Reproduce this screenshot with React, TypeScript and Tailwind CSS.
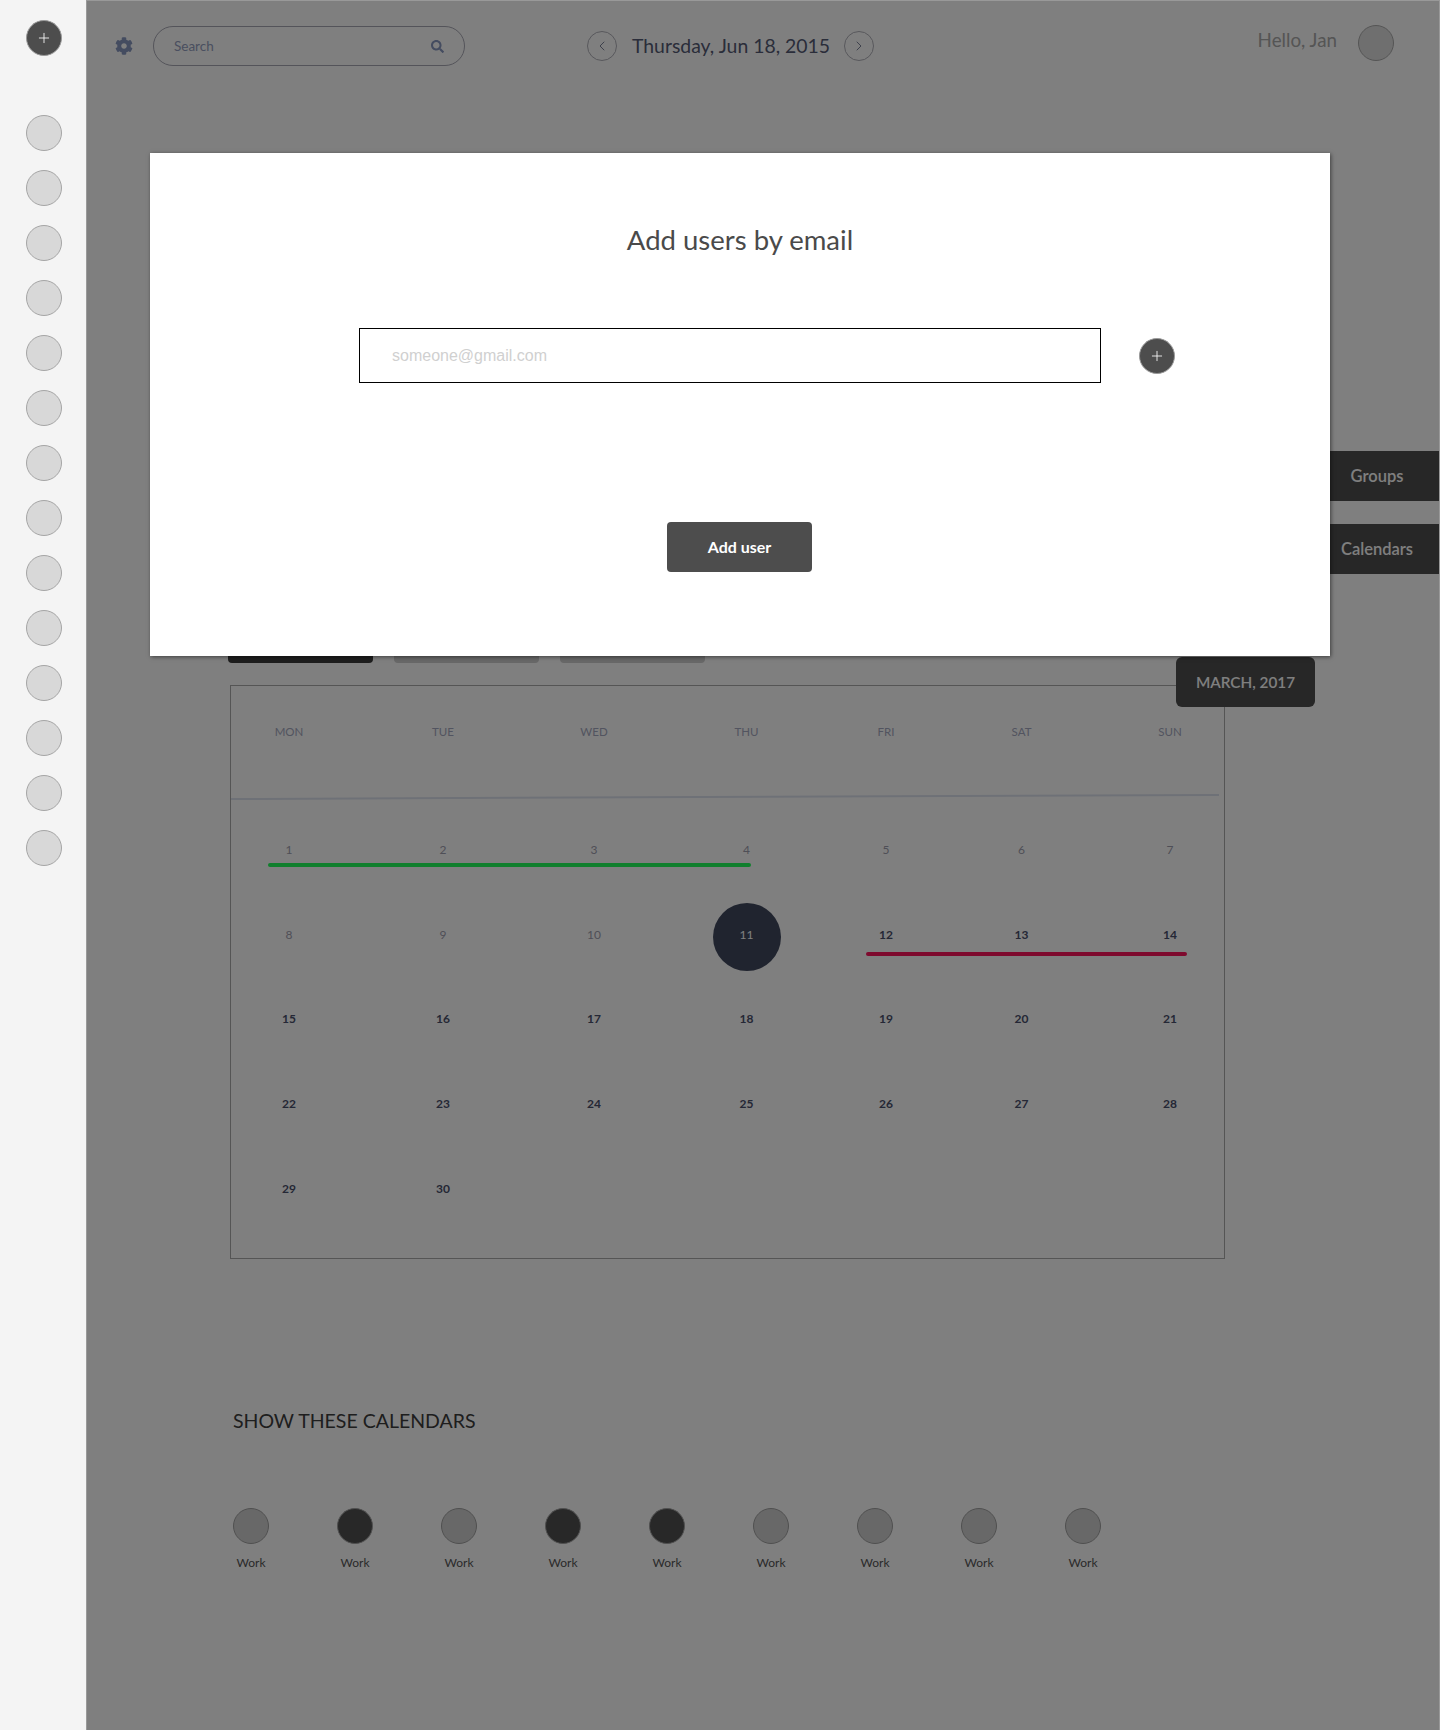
import React from 'react';
import { ChevronLeft, ChevronRight, Plus } from 'lucide-react';
import { FaCog, FaSearch } from 'react-icons/fa';

const weekDays = ['MON', 'TUE', 'WED', 'THU', 'FRI', 'SAT', 'SUN'];
const weeks = [
  [1, 2, 3, 4, 5, 6, 7],
  [8, 9, 10, 11, 12, 13, 14],
  [15, 16, 17, 18, 19, 20, 21],
  [22, 23, 24, 25, 26, 27, 28],
  [29, 30],
];
const calendars = [false, true, false, true, true, false, false, false, false];
const gridCols = 'grid grid-cols-[116px_192px_110px_195px_84px_187px_110px]';

const AddButton: React.FC = () => (
  <button className="w-9 h-9 rounded-full bg-[#4d4d4d] border border-[#9a9a9a] flex items-center justify-center shrink-0">
    <Plus className="w-4 h-4 text-white" strokeWidth={1.25} />
  </button>
);

const Sidebar: React.FC = () => (
  <aside className="w-[86px] shrink-0 bg-[#f4f4f4] flex flex-col pl-[25.5px] pt-5">
    <AddButton />
    <div className="mt-[59px] flex flex-col gap-[19px]">
      {Array.from({ length: 14 }).map((_, i) => (
        <div key={i} className="w-9 h-9 rounded-full bg-[#d8d8d8] border border-[#a5a5a5]" />
      ))}
    </div>
  </aside>
);

const Header: React.FC = () => (
  <header className="h-[92px] flex items-start relative">
    <FaCog className="w-[18px] h-[18px] text-[#8898c0] ml-[29px] mt-[37px]" />
    <div className="ml-[20px] mt-[26px] w-[312px] h-[40px] rounded-full border border-[#a8a8b4] flex items-center justify-between pl-5 pr-5">
      <span className="mt-[1px] text-[13.5px] text-[#949ec0]">Search</span>
      <FaSearch className="w-[13px] h-[13px] text-[#8898c0]" />
    </div>
    <div className="ml-[122px] mt-[31px] flex items-center">
      <div className="w-[30px] h-[30px] rounded-full border border-[#b0b0b8] flex items-center justify-center">
        <ChevronLeft className="w-4 h-4 text-[#7c8298]" strokeWidth={1.5} />
      </div>
      <span className="ml-[15px] w-[198px] text-[19.4px] text-[#545a74] whitespace-nowrap">Thursday, Jun 18, 2015</span>
      <div className="ml-[14px] w-[30px] h-[30px] rounded-full border border-[#b0b0b8] flex items-center justify-center">
        <ChevronRight className="w-4 h-4 text-[#7c8298]" strokeWidth={1.5} />
      </div>
    </div>
    <div className="ml-auto mr-[46px] mt-[25px] flex items-start">
      <span className="mt-[2px] text-[18.8px] leading-[26px] text-[#aaaaaa]">Hello, Jan</span>
      <div className="ml-[21px] w-9 h-9 rounded-full bg-[#dedede] border border-[#aaaaaa]" />
    </div>
  </header>
);

const CalendarGrid: React.FC = () => (
  <div className="relative ml-[144px] mt-[22px] w-[995px] h-[574px] border border-[#aaaaaa]">
    <div className={`${gridCols} h-[46px] mt-[23px] items-center`}>
      {weekDays.map(d => (
        <span key={d} className="text-center text-[11.5px] text-[#a4a8c0]">{d}</span>
      ))}
    </div>
    <div className="mt-[41px] w-[988px] h-[2px] bg-[#dde2ee] -rotate-[0.23deg]" />
    <div className="pt-[10px] relative">
      {weeks.map((week, wi) => (
        <div key={wi} className={`${gridCols} h-[84.6px] items-center`}>
          {week.map(day => {
            const today = day === 11;
            const past = day < 11;
            return (
              <div key={day} className="relative flex items-center justify-center">
                {today && <div className="absolute w-[68px] h-[68px] rounded-full bg-[#40485e] top-1/2 left-1/2 -translate-x-1/2 -translate-y-1/2 mt-[2px]" />}
                <span
                  className={`relative text-[12px] ${
                    today ? 'text-white' : past ? 'text-[#9e9eae]' : 'text-[#4a506c] font-bold'
                  }`}
                >
                  {day}
                </span>
              </div>
            );
          })}
        </div>
      ))}
      <div className="absolute left-[37px] top-[65px] w-[483px] h-1 rounded-full bg-[#21ff5a]" />
      <div className="absolute left-[635px] top-[154px] w-[321px] h-1 rounded-full bg-[#fc145c]" />
    </div>
  </div>
);

const ShowCalendars: React.FC = () => (
  <section className="ml-[147px] mt-[149px]">
    <h2 className="text-[19.5px] leading-[26px] text-[#3c3c3c]">SHOW THESE CALENDARS</h2>
    <div className="mt-[74px] flex">
      {calendars.map((on, i) => (
        <div key={i} className="w-9 mr-[68px] flex flex-col items-center">
          <div className={`w-9 h-9 rounded-full border border-[#a0a0a0] ${on ? 'bg-[#505050]' : 'bg-[#d0d0d0]'}`} />
          <span className="mt-[11px] text-[12px] leading-[16px] text-[#555555]">Work</span>
        </div>
      ))}
    </div>
  </section>
);

const AddUsersModal: React.FC = () => (
  <div className="absolute z-20 left-[150px] top-[153px] w-[1180px] h-[503px] bg-white shadow-[1px_1px_4px_rgba(0,0,0,0.5)] flex flex-col">
    <h1 className="mt-[71px] text-center text-[27.5px] leading-[32px] text-[#4a4a4a]">Add users by email</h1>
    <div className="mt-[72px] ml-[209px] flex items-center">
      <div className="w-[742px] h-[55px] border border-black flex items-center pl-8">
        <span className="text-[16px] text-[#d0d0d0] font-['Liberation_Sans',sans-serif]">someone@gmail.com</span>
      </div>
      <div className="ml-[37.5px]">
        <AddButton />
      </div>
    </div>
    <button className="mt-[139px] ml-[517px] w-[145px] h-[50px] rounded bg-[#4d4d4d] text-white text-[16px] font-bold">
      Add user
    </button>
  </div>
);

const App: React.FC = () => (
  <div className="relative w-[1440px] h-[1730px] flex overflow-hidden bg-white font-['Lato',sans-serif]">
    <Sidebar />
    <main className="relative flex-1 flex flex-col">
      <Header />
      <div className="mt-[359px] self-end w-[130px] flex flex-col gap-[23px]">
        <div className="h-[50px] pt-[1px] bg-[#4e4e4e] text-[#ffffff] text-[16.5px] font-semibold flex items-center justify-end pr-[17px]">
          <span className="w-[92px] text-center">Groups</span>
        </div>
        <div className="h-[50px] pt-[1px] bg-[#4e4e4e] text-[#ffffff] text-[16.5px] font-semibold flex items-center justify-end pr-[17px]">
          <span className="w-[92px] text-center">Calendars</span>
        </div>
      </div>
      <div className="relative mt-[39px] ml-[142px] flex gap-[21px]">
        <div className="w-[145px] h-[50px] rounded bg-[#3c3c3c]" />
        <div className="w-[145px] h-[50px] rounded bg-[#d0d0d0]" />
        <div className="w-[145px] h-[50px] rounded bg-[#d0d0d0]" />
        <div className="absolute z-10 left-[948px] top-[44px] w-[139px] h-[50px] rounded-md bg-[#4e4e4e] text-white text-[15.3px] font-semibold flex items-center justify-center">
          MARCH, 2017
        </div>
      </div>
      <CalendarGrid />
      <ShowCalendars />
      {/* page dim behind the modal, sidebar stays bright */}
      <div className="absolute inset-0 z-[15] bg-black/50 border-t border-l border-r border-[#999999]" />
    </main>
    <AddUsersModal />
  </div>
);

export default App;
